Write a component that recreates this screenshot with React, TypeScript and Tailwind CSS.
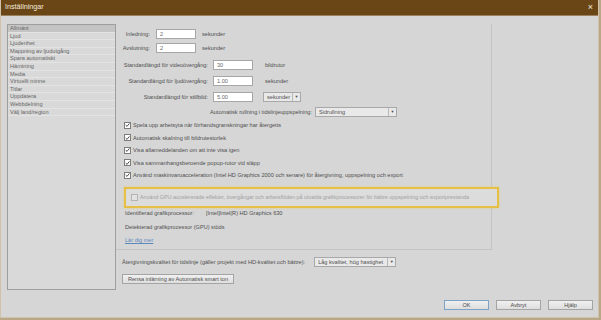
const sidebarItems = [
  'Allmänt',
  'Ljud',
  'Ljudenhet',
  'Mappning av ljudutgång',
  'Spara automatiskt',
  'Hämtning',
  'Media',
  'Virtuellt minne',
  'Titlar',
  'Uppdatera',
  'Webbdelning',
  'Välj land/region',
]

function Checkbox({ checked = true, disabled = false }: { checked?: boolean; disabled?: boolean }) {
  return (
    <span
      className={`flex h-[7px] w-[7px] shrink-0 items-center justify-center border ${
        disabled ? 'border-[#b4b4b4] bg-[#e2e2e2]' : 'border-[#7c7c7c] bg-white'
      }`}
    >
      {checked && (
        <svg width="6" height="6" viewBox="0 0 6 6">
          <path d="M0.8 3.1 L2.4 4.7 L5.3 1.1" fill="none" stroke="#3a3a3a" strokeWidth="1.1" />
        </svg>
      )}
    </span>
  )
}

function CheckRow({ label }: { label: string }) {
  return (
    <div className="flex h-[12.5px] items-center gap-[2px] pl-[8px]">
      <Checkbox />
      <span className="whitespace-nowrap">{label}</span>
    </div>
  )
}

function TextInput({ value }: { value: string }) {
  return (
    <div className="flex h-[10px] w-[40px] items-center border border-[#a6a6a6] bg-white pl-[3px] text-[#6a6a6a]">
      {value}
    </div>
  )
}

function Dropdown({ value, width }: { value: string; width: string }) {
  return (
    <div className={`${width} flex h-[10px] items-center border border-[#a8a8a8] bg-[#e9e9e9]`}>
      <span className="flex-1 truncate pl-[3px]">{value}</span>
      <span className="flex h-full w-[8px] items-center justify-center border-l border-[#b8b8b8] text-[4px]">▼</span>
    </div>
  )
}

function DialogButton({ label, primary = false }: { label: string; primary?: boolean }) {
  return (
    <div
      className={`flex h-[10px] w-[45px] items-center justify-center border bg-gradient-to-b from-[#f0f0f0] to-[#dedede] text-[#4a4a4a] ${
        primary ? 'border-[#7fa3c6]' : 'border-[#a4a4a4]'
      }`}
    >
      {label}
    </div>
  )
}

export default function App() {
  return (
    <div className="h-[320px] w-[601px] overflow-hidden bg-[#b9a888] font-['Liberation_Sans',Arial,sans-serif] text-[5.6px] text-[#4f4f4f]">
      <div className="flex h-[318px] w-[599px] flex-col border-x border-b border-[#cfc2a8] bg-[#d6d6d6]">
        {/* Title bar */}
        <div className="flex h-[16px] shrink-0 items-center justify-between border-b border-[#9b8160] bg-[#6a4617] pl-[4px] pr-[5px] text-[7.2px] text-[#f4ecdc]">
          <span>Inställningar</span>
          <span className="text-[9px] leading-none">×</span>
        </div>

        <div className="flex flex-1 pl-[6px] pr-[5px] pt-[8px]">
          {/* Sidebar */}
          <div className="h-[266px] w-[109px] shrink-0 border border-[#9e9e9e] bg-[#d9d9d9] text-[#666]">
            {sidebarItems.map((item, i) => (
              <div
                key={item}
                className={`flex h-[7.6px] items-center border-b border-[#e3e3e3] pl-[2px] ${
                  i === 0 ? 'bg-[#c4c4c4]' : ''
                }`}
              >
                {item}
              </div>
            ))}
          </div>

          <div className="flex flex-1 flex-col">
            {/* Settings panel */}
            <div className="h-[226px] w-[376px] border-b border-r border-[#c3c3c3]">
              <div className="mt-[5px] flex h-[10px] items-center">
                <span className="w-[34px] text-right">Inledning:</span>
                <span className="ml-[6px]">
                  <TextInput value="2" />
                </span>
                <span className="ml-[6px]">sekunder</span>
              </div>
              <div className="mt-[4px] flex h-[10px] items-center">
                <span className="w-[34px] text-right">Avslutning:</span>
                <span className="ml-[6px]">
                  <TextInput value="2" />
                </span>
                <span className="ml-[6px]">sekunder</span>
              </div>
              <div className="mt-[7px] flex h-[10px] items-center">
                <span className="w-[92px] whitespace-nowrap text-right">Standardlängd för videoövergång:</span>
                <span className="ml-[5px]">
                  <TextInput value="30" />
                </span>
                <span className="ml-[12px]">bildrutor</span>
              </div>
              <div className="mt-[6px] flex h-[10px] items-center">
                <span className="w-[92px] whitespace-nowrap text-right">Standardlängd för ljudövergång:</span>
                <span className="ml-[5px]">
                  <TextInput value="1.00" />
                </span>
                <span className="ml-[12px]">sekunder</span>
              </div>
              <div className="mt-[6px] flex h-[10px] items-center">
                <span className="w-[92px] whitespace-nowrap text-right">Standardlängd för stillbild:</span>
                <span className="ml-[5px]">
                  <TextInput value="5.00" />
                </span>
                <span className="ml-[10px]">
                  <Dropdown value="sekunder" width="w-[38px]" />
                </span>
              </div>
              <div className="mt-[5px] flex h-[10px] items-center">
                <span className="w-[196px] whitespace-nowrap text-right">Automatisk rullning i tidslinjeuppspelning:</span>
                <span className="ml-[3px]">
                  <Dropdown value="Sidrullning" width="w-[82px]" />
                </span>
              </div>

              <div className="mt-[2px]">
                <CheckRow label="Spela upp arbetsyta när förhandsgranskningar har återgetts" />
                <CheckRow label="Automatisk skalning till bildrutestorlek" />
                <CheckRow label="Visa allameddelanden om att inte visa igen" />
                <CheckRow label="Visa sammanhangsberoende popup-rutor vid släpp" />
                <CheckRow label="Använd maskinvaruacceleration (Intel HD Graphics 2000 och senare) för återgivning, uppspelning och export" />
              </div>

              {/* Highlighted GPU option */}
              <div className="ml-[8px] mt-[5.5px] flex h-[21px] w-[375px] items-center gap-[2px] border-2 border-[#e6bf45] bg-[#dcdcdc] pl-[5px] text-[5.4px] text-[#a2a2a2] shadow-[0_0_2px_#e9cf7a]">
                <Checkbox checked={false} disabled />
                <span className="whitespace-nowrap">
                  Använd GPU-accelererade effekter, övergångar och arbetsflöden på utvalda grafikprocessorer för bättre uppspelning och exportprestanda
                </span>
              </div>

              <div className="flex h-[10px] items-center pl-[9px]">
                <span className="w-[81px]">Identifierad grafikprocessor:</span>
                <span>[Intel]Intel(R) HD Graphics 630</span>
              </div>
              <div className="mt-[4px] flex h-[10px] items-center pl-[9px]">Detekterad grafikprocessor (GPU) stöds</div>
              <div className="mt-[3px] flex h-[10px] items-center pl-[9px]">
                <span className="text-[#5b88bd] underline">Lär dig mer</span>
              </div>
            </div>

            <div className="mt-[6px] flex h-[12px] items-center pl-[6px]">
              <span className="whitespace-nowrap">Återgivningskvalitet för tidslinje (gäller projekt med HD-kvalitet och bättre):</span>
              <span className="ml-[9px]">
                <Dropdown value="Låg kvalitet, hög hastighet" width="w-[82px]" />
              </span>
            </div>
            <div className="mt-[6px] pl-[6px]">
              <div className="flex h-[10px] w-[112px] items-center justify-center whitespace-nowrap border border-[#a4a4a4] bg-gradient-to-b from-[#f0f0f0] to-[#dedede]">
                Rensa inlärning av Automatisk smart ton
              </div>
            </div>

            <div className="mt-[16px] flex justify-end gap-[7px]">
              <DialogButton label="OK" primary />
              <DialogButton label="Avbryt" />
              <DialogButton label="Hjälp" />
            </div>
          </div>
        </div>
      </div>
    </div>
  )
}
